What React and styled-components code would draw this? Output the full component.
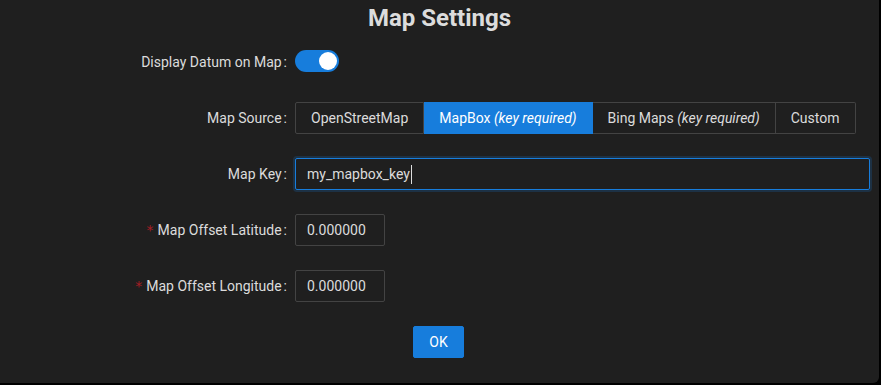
import React from 'react';
import styled, { createGlobalStyle } from 'styled-components';

const GlobalStyle = createGlobalStyle`
  html, body {
    margin: 0;
    padding: 0;
    background: #000;
  }
  body {
    font-family: Roboto, 'Liberation Sans', sans-serif;
    font-size: 14px;
    color: rgba(255, 255, 255, 0.85);
  }
`;

const Panel = styled.div`
  width: 879px;
  height: 383px;
  background: #1f1f1f;
  border-bottom-right-radius: 6px;
  box-sizing: border-box;
  padding-top: 2px;
`;

const Title = styled.h2`
  margin: 0 0 12px;
  font-size: 24px;
  line-height: 32px;
  font-weight: 700;
  text-align: center;
  color: rgba(255, 255, 255, 0.85);
`;

const Form = styled.div`
  display: flex;
  flex-direction: column;
  gap: 24px;
  width: 870px;
`;

const Row = styled.div`
  display: grid;
  grid-template-columns: 295px 1fr;
  align-items: center;
  min-height: 32px;
`;

const Label = styled.label`
  display: flex;
  justify-content: flex-end;
  align-items: center;
  line-height: 32px;
  white-space: nowrap;
  color: rgba(255, 255, 255, 0.85);
  &::after {
    content: ':';
    margin: 0 8px 0 2px;
  }
`;

const Required = styled.span`
  color: #a61d24;
  margin-right: 4px;
  font-family: SimSun, 'DejaVu Sans', sans-serif;
  font-size: 14px;
`;

const Switch = styled.span`
  position: relative;
  display: inline-block;
  width: 44px;
  height: 22px;
  border-radius: 11px;
  background: ${p => (p.$on ? '#177ddc' : 'rgba(255,255,255,0.3)')};
  &::after {
    content: '';
    position: absolute;
    top: 2px;
    left: ${p => (p.$on ? '24px' : '2px')};
    width: 18px;
    height: 18px;
    border-radius: 50%;
    background: #fff;
  }
`;

const Segmented = styled.div`
  display: flex;
`;

const Segment = styled.span`
  height: 32px;
  line-height: 30px;
  padding: 0 15px;
  box-sizing: border-box;
  border: 1px solid ${p => (p.$active ? '#177ddc' : '#434343')};
  border-left-width: ${p => (p.$first ? '1px' : '0')};
  background: ${p => (p.$active ? '#177ddc' : 'transparent')};
  color: ${p => (p.$active ? '#fff' : 'rgba(255, 255, 255, 0.85)')};
  white-space: nowrap;
  &:first-child {
    border-radius: 2px 0 0 2px;
  }
  &:last-child {
    border-radius: 0 2px 2px 0;
  }
  em {
    font-style: italic;
  }
`;

const Field = styled.div`
  box-sizing: border-box;
  height: 32px;
  width: ${p => p.$width || '100%'};
  padding: 0 11px;
  line-height: 30px;
  border: 1px solid ${p => (p.$focused ? '#177ddc' : '#434343')};
  border-radius: 2px;
  box-shadow: ${p => (p.$focused ? '0 0 0 2px rgba(23, 125, 220, 0.2)' : 'none')};
  color: rgba(255, 255, 255, 0.85);
  display: flex;
  align-items: center;
`;

const Caret = styled.span`
  display: inline-block;
  width: 1px;
  height: 19px;
  margin-left: 1px;
  background: rgba(255, 255, 255, 0.85);
`;

const Footer = styled.div`
  display: flex;
  justify-content: center;
  padding-left: 7px;
`;

const Button = styled.button`
  height: 32px;
  padding: 4px 15px;
  border: 1px solid #177ddc;
  border-radius: 2px;
  background: #177ddc;
  color: #fff;
  font-family: Roboto, 'Liberation Sans', sans-serif;
  font-size: 14px;
  line-height: 22px;
`;

const sources = [
  { name: 'OpenStreetMap' },
  { name: 'MapBox', key: true, active: true },
  { name: 'Bing Maps', key: true },
  { name: 'Custom' },
];

export default function App() {
  return (
    <>
      <GlobalStyle />
      <Panel>
        <Title>Map Settings</Title>
        <Form>
          <Row>
            <Label>Display Datum on Map</Label>
            <div>
              <Switch $on />
            </div>
          </Row>
          <Row>
            <Label>Map Source</Label>
            <div>
              <Segmented>
                {sources.map((s, i) => (
                  <Segment key={s.name} $active={s.active} $first={i === 0}>
                    {s.name}
                    {s.key && <em> (key required)</em>}
                  </Segment>
                ))}
              </Segmented>
            </div>
          </Row>
          <Row>
            <Label>Map Key</Label>
            <Field $focused>
              my_mapbox_key
              <Caret />
            </Field>
          </Row>
          <Row>
            <Label>
              <Required>*</Required>Map Offset Latitude
            </Label>
            <Field $width="90px">0.000000</Field>
          </Row>
          <Row>
            <Label>
              <Required>*</Required>Map Offset Longitude
            </Label>
            <Field $width="90px">0.000000</Field>
          </Row>
          <Footer>
            <Button>OK</Button>
          </Footer>
        </Form>
      </Panel>
    </>
  );
}
